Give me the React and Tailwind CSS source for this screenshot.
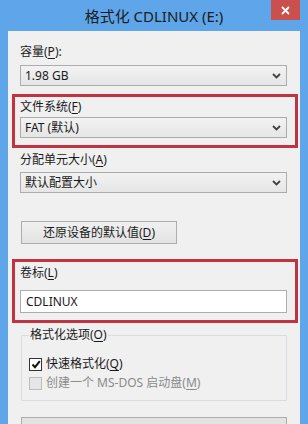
import React from 'react';

const Chevron = () => (
  <svg width="9" height="6" viewBox="0 0 9 6" className="shrink-0">
    <path d="M1 1 L4.5 4.5 L8 1" fill="none" stroke="#404040" strokeWidth="1.8" />
  </svg>
);

const Combo = ({ value }) => (
  <div className="flex h-[21px] w-[267px] items-center justify-between border border-[#acacac] bg-gradient-to-b from-[#f2f2f2] to-[#e6e6e6] pl-[4px] pr-[5px]">
    <span>{value}</span>
    <Chevron />
  </div>
);

const Key = ({ k }) => <span className="underline underline-offset-2">{k}</span>;

const App = () => {
  return (
    <div
      className="flex h-[424px] w-[308px] flex-col overflow-hidden bg-[#5ea6e9] text-[12px] leading-[16px] text-[#1a1a1a]"
      style={{ fontFamily: '"Segoe UI", "Noto Sans", "Noto Sans CJK SC", sans-serif' }}
    >
      {/* title bar */}
      <div className="relative flex h-[31px] shrink-0 items-center justify-center">
        <span className="text-[15px] text-[#1b1b1b]">格式化 CDLINUX (E:)</span>
        <div className="absolute right-[8px] top-0 flex h-[20px] w-[29px] items-center justify-center bg-[#c9504c]">
          <svg width="9" height="9" viewBox="0 0 9 9">
            <path d="M1 1 L8 8 M8 1 L1 8" stroke="#fff" strokeWidth="1.8" />
          </svg>
        </div>
      </div>

      {/* client area */}
      <div className="mx-[8px] flex flex-1 flex-col bg-[#f0f0f0] pl-[12px]">
        <div className="mt-[13px]">容量(<Key k="P" />):</div>
        <div className="mt-[5px]">
          <Combo value="1.98 GB" />
        </div>

        <div className="ml-[-8px] mt-[8px] w-[286px] border-[3px] border-[#bf3440] pb-[7px] pl-[5px] pt-[2px]">
          <div>文件系统(<Key k="F" />)</div>
          <div className="mt-[2px]">
            <Combo value="FAT (默认)" />
          </div>
        </div>

        <div className="mt-[4px]">分配单元大小(<Key k="A" />)</div>
        <div className="mt-[4px]">
          <Combo value="默认配置大小" />
        </div>

        <div className="ml-[1px] mt-[28px] flex h-[23px] w-[156px] items-center justify-center border border-[#adadad] bg-gradient-to-b from-[#f0f0f0] to-[#e3e3e3]">
          还原设备的默认值(<Key k="D" />)
        </div>

        <div className="ml-[-8px] mt-[15px] w-[286px] border-[3px] border-[#bf3440] pb-[7px] pl-[5px] pt-[3px]">
          <div>卷标(<Key k="L" />)</div>
          <div className="mt-[9px] flex h-[23px] w-[267px] items-center border border-[#abadb3] bg-white pl-[5px]">
            CDLINUX
          </div>
        </div>

        <fieldset className="ml-[1px] mt-[4px] h-[74px] w-[266px] border border-[#d8dde2] pl-[7px] pr-[6px]">
          <legend className="px-[1px]">格式化选项(<Key k="O" />)</legend>
          <div className="mt-[13px] flex items-center gap-[4px]">
            <div className="flex h-[13px] w-[13px] items-center justify-center border border-[#333] bg-white">
              <svg width="10" height="9" viewBox="0 0 10 9">
                <path d="M1.5 4.5 L4 7.2 L8.8 1.2" fill="none" stroke="#111" strokeWidth="2" />
              </svg>
            </div>
            <span>快速格式化(<Key k="Q" />)</span>
          </div>
          <div className="mt-[3px] flex items-center gap-[4px] text-[#8a8a8a]">
            <div className="h-[13px] w-[13px] border border-[#bcbcbc] bg-[#e6e6e6]" />
            <span>创建一个 MS-DOS 启动盘(<Key k="M" />)</span>
          </div>
        </fieldset>

        <div className="ml-[1px] mt-[16px] h-[23px] w-[266px] border border-[#adadad] bg-[#e3e3e3]" />
      </div>
    </div>
  );
};

export default App;
